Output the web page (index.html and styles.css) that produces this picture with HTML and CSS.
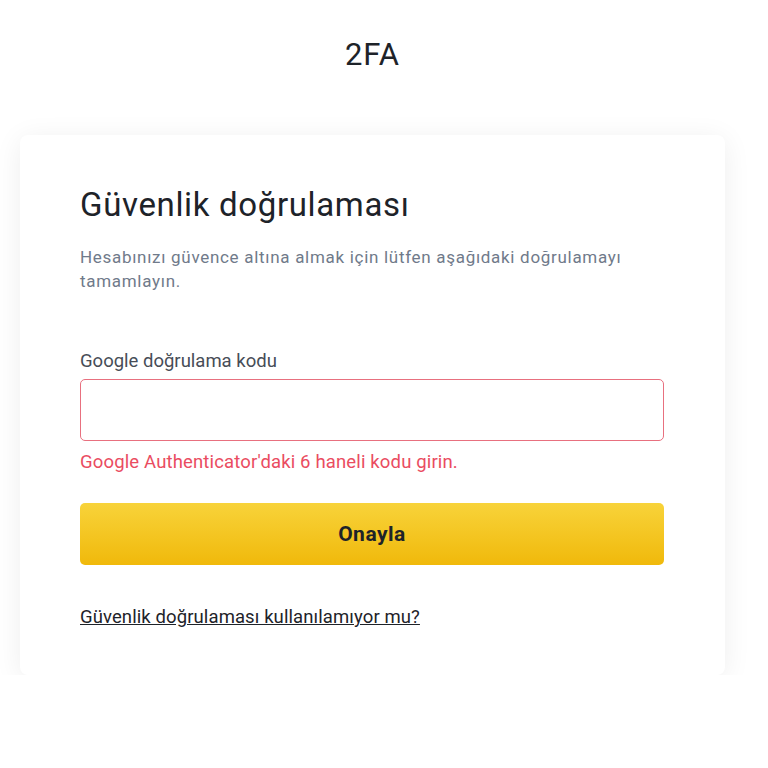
FILE: index.html
```html
<!DOCTYPE html>
<html lang="tr">
<head>
<meta charset="utf-8">
<title>2FA</title>
<link rel="stylesheet" href="styles.css">
</head>
<body>
<div class="page">
  <h1 class="page-title">2FA</h1>
  <div class="card">
    <h2 class="card-title">Güvenlik doğrulaması</h2>
    <p class="card-sub">Hesabınızı güvence altına almak için lütfen aşağıdaki doğrulamayı tamamlayın.</p>
    <label class="field-label" for="code">Google doğrulama kodu</label>
    <input class="field-input" id="code" type="text">
    <div class="field-error">Google Authenticator'daki 6 haneli kodu girin.</div>
    <button class="btn-primary" type="button">Onayla</button>
    <a class="help-link" href="#">Güvenlik doğrulaması kullanılamıyor mu?</a>
  </div>
</div>
</body>
</html>
```

FILE: styles.css
```css
* { box-sizing: border-box; }
html, body { margin: 0; padding: 0; background: #ffffff; }
body { font-family: Roboto, "Liberation Sans", sans-serif; color: #1e2329; }
.page { width: 745px; display: flex; flex-direction: column; align-items: center; }
.page-title {
  margin: 0; padding-top: 37px; height: 135px;
  font-size: 31px; line-height: 36px; font-weight: 400; letter-spacing: 1px; color: #1e2329;
}
.card {
  align-self: stretch; margin: 0 20px;
  background: #fff; border-radius: 8px;
  box-shadow: 0 4px 28px rgba(0,0,0,0.07);
  padding: 50px 61px 46px 60px;
  display: flex; flex-direction: column; align-items: flex-start;
}
.card-title { margin: 0; font-size: 33px; line-height: 40px; font-weight: 400; letter-spacing: 0.65px; color: #1e2329; }
.card-sub { margin: 20px 0 0; font-size: 17px; line-height: 24px; letter-spacing: 0.7px; color: #707a8a; }
.field-label { margin-top: 56px; font-size: 18.5px; line-height: 24px; color: #474d57; }
.field-input {
  margin-top: 6px; width: 100%; height: 62px;
  border: 1px solid #e8707f; border-radius: 5px; outline: none; background: #fff;
}
.field-error { margin-top: 9px; font-size: 18.5px; line-height: 24px; letter-spacing: 0.15px; color: #ea4c61; }
.btn-primary {
  margin-top: 29px; width: 100%; height: 62px; border: 0; border-radius: 5px;
  background: linear-gradient(180deg, #f8d33a 0%, #f0b90b 100%);
  font-family: inherit; font-size: 21px; font-weight: 700; letter-spacing: 0.5px; color: #1e2329; cursor: pointer;
}
.help-link {
  margin-top: 40px; font-size: 18.5px; line-height: 24px; letter-spacing: 0.1px; color: #1e2329; text-decoration: underline;
}
```
